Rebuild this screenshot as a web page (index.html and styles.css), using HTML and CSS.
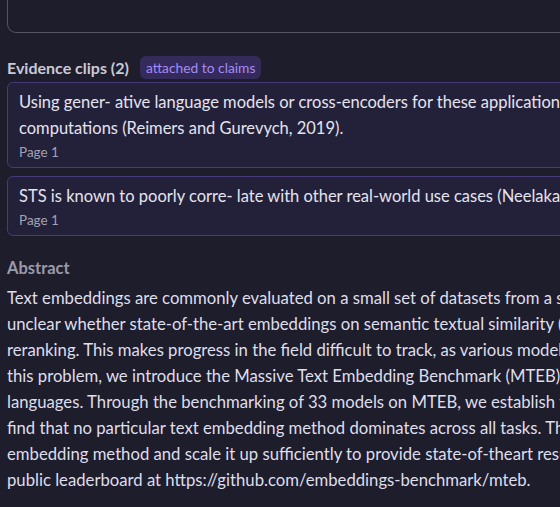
FILE: index.html
```html
<!DOCTYPE html>
<html lang="en">
<head>
  <meta charset="UTF-8">
  <title>Paper detail</title>
  <link rel="stylesheet" href="styles.css">
</head>
<body>

<div class="panel">
  <div class="notes-box"></div>

  <section class="evidence">
    <div class="section-head">
      <h3>Evidence clips (2)</h3>
      <span class="badge">attached to claims</span>
    </div>

    <div class="clip">
      <p class="clip-text">Using gener- ative language models or cross-encoders for these applications will entail massive<br>
      computations (Reimers and Gurevych, 2019).</p>
      <span class="clip-page">Page 1</span>
    </div>

    <div class="clip">
      <p class="clip-text">STS is known to poorly corre- late with other real-world use cases (Neelakantan et al., 2022; Wang et al., 2021).</p>
      <span class="clip-page">Page 1</span>
    </div>
  </section>

  <section class="abstract">
    <h3>Abstract</h3>
    <p>Text embeddings are commonly evaluated on a small set of datasets from a single task not covering their possible applications to other tasks. It is<br>
    unclear whether state-of-the-art embeddings on semantic textual similarity (STS) can be equally well applied to other tasks like clustering or<br>
    reranking. This makes progress in the field difficult to track, as various models are constantly being proposed without proper evaluation. To solve<br>
    this problem, we introduce the Massive Text Embedding Benchmark (MTEB). MTEB spans 8 embedding tasks covering a total of 58 datasets and 112<br>
    languages. Through the benchmarking of 33 models on MTEB, we establish the most comprehensive benchmark of text embeddings to date. We<br>
    find that no particular text embedding method dominates across all tasks. This suggests that the field has yet to converge on a universal text<br>
    embedding method and scale it up sufficiently to provide state-of-theart results on all embedding tasks. MTEB comes with open-source code and a<br>
    public leaderboard at https://github.com/embeddings-benchmark/mteb.</p>
  </section>
</div>

</body>
</html>
```

FILE: styles.css
```css
body {
  margin: 0;
  background: #1e1d2c;
  color: #dcdcea;
  font-family: Lato, "Noto Sans", sans-serif;
  overflow: hidden;
}

.panel {
  width: 1100px;
  padding: 0 7px;
}

.notes-box {
  height: 32px;
  border: 1px solid #55555f;
  border-top: none;
  border-radius: 0 0 9px 9px;
}

.section-head {
  display: flex;
  align-items: center;
  gap: 11px;
  height: 23px;
  margin: 23px 0 3px;
}

.section-head h3 {
  margin: 0;
  font-size: 16px;
  font-weight: 700;
  color: #c9c9d8;
}

.badge {
  background: #342b5a;
  color: #a58cf5;
  font-size: 13.8px;
  padding: 3px 6px;
  border-radius: 6px;
  line-height: 17px;
}

.clip {
  background: #23203a;
  border: 1px solid #463a78;
  border-radius: 6px;
  padding: 6px 11px;
  margin-bottom: 8px;
}

.clip-text {
  margin: 0;
  font-size: 16.5px;
  line-height: 26px;
  white-space: nowrap;
  color: #e4e4f0;
}

.clip-page {
  display: block;
  margin-top: 2px;
  font-size: 13.5px;
  line-height: 18px;
  color: #a2a2b4;
}

.abstract {
  margin-top: 22px;
}

.abstract h3 {
  margin: 0 0 7px;
  font-size: 16.5px;
  line-height: 20px;
  font-weight: 700;
  color: #9a9aab;
}

.abstract p {
  margin: 0;
  font-size: 16.7px;
  line-height: 26px;
  white-space: nowrap;
  color: #dedeec;
}
```
